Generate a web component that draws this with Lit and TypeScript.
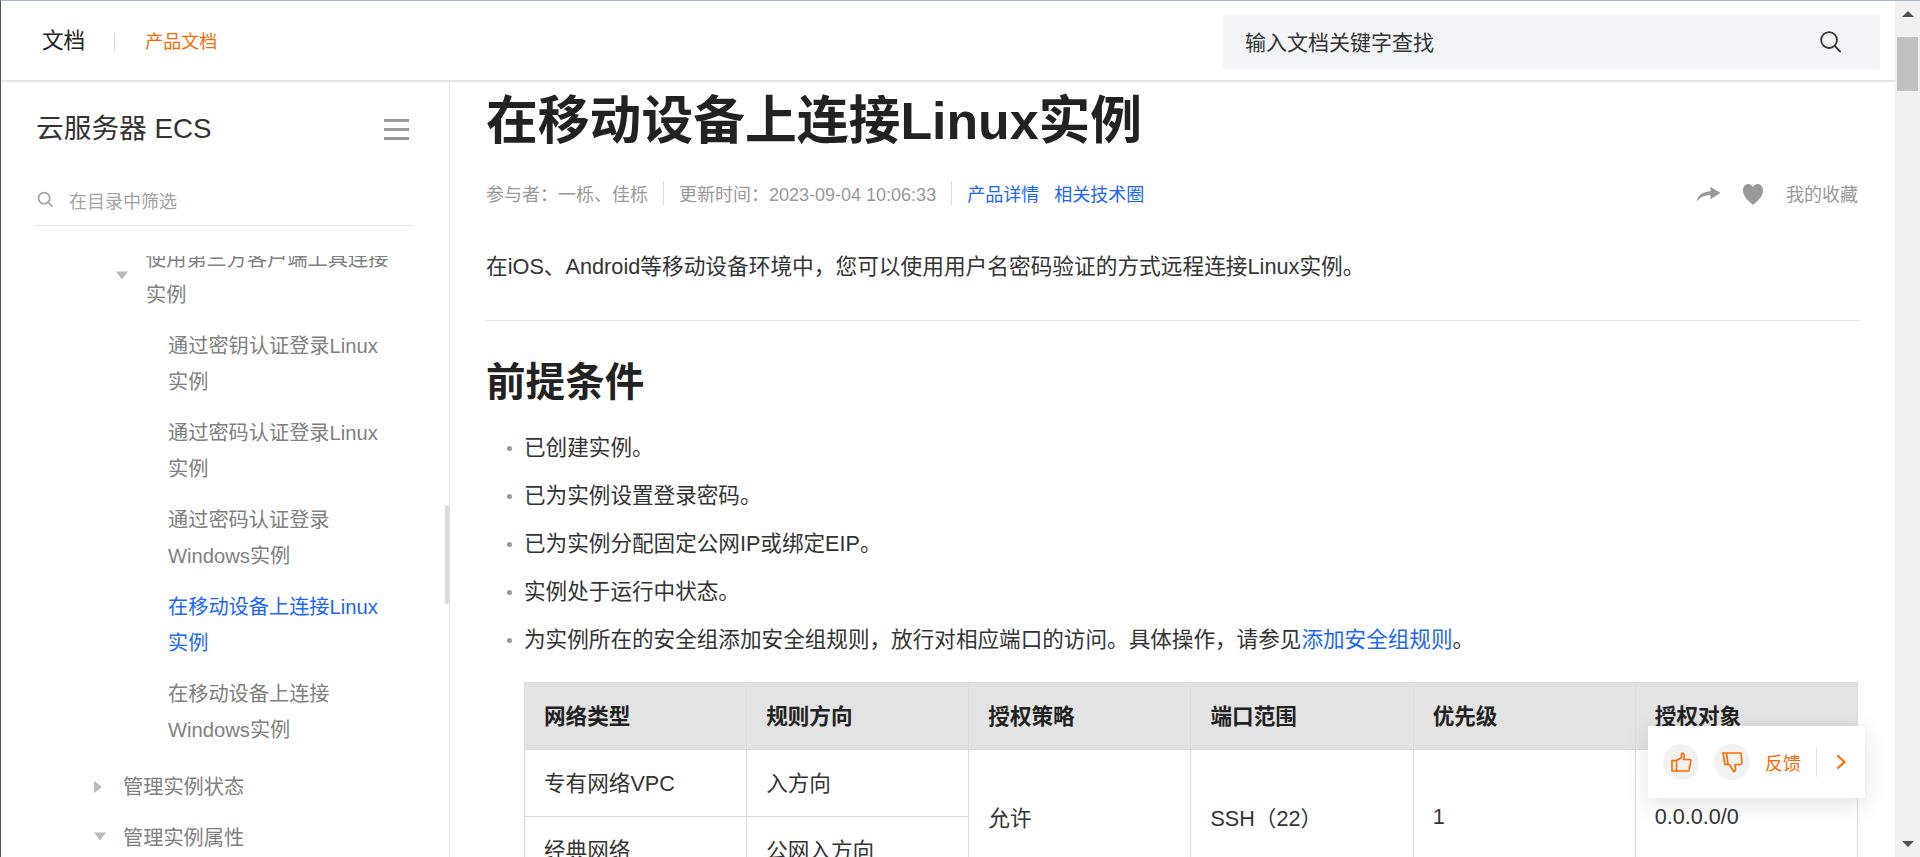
import { LitElement, html, css, svg } from "lit";
import { customElement } from "lit/decorators.js";

type Node = { t: string; lvl: number; arrow?: "down" | "right"; active?: boolean; cls?: string };

const TREE: Node[] = [
  { t: "使用第三方客户端工具连接实例", lvl: 2, arrow: "down" },
  { t: "通过密钥认证登录Linux实例", lvl: 3 },
  { t: "通过密码认证登录Linux实例", lvl: 3 },
  { t: "通过密码认证登录Windows实例", lvl: 3 },
  { t: "在移动设备上连接Linux实例", lvl: 3, active: true },
  { t: "在移动设备上连接Windows实例", lvl: 3, cls: "endgroup" },
  { t: "管理实例状态", lvl: 1, arrow: "right" },
  { t: "管理实例属性", lvl: 1, arrow: "down" },
];

const search = (stroke: string, w: number) => svg`<circle cx="8.4" cy="8.4" r="6.6" fill="none" stroke=${stroke} stroke-width=${w}/><path d="M13.2 13.2 L17.6 18" fill="none" stroke=${stroke} stroke-width=${w} stroke-linecap="round"/>`;

@customElement("app-root")
export class AppRoot extends LitElement {
  static styles = css`
    :host { display: block; width: 1920px; height: 857px; overflow: hidden; position: relative; background: #fff;
      font-family: "Liberation Sans", "Noto Sans CJK SC", sans-serif; color: #333; box-sizing: border-box;
      border-top: 1px solid #a9b8d6; border-left: 1px solid #555; }
    * { box-sizing: border-box; }
    .app { display: flex; height: 856px; }
    .main { width: 1894px; display: flex; flex-direction: column; height: 100%; }
    .sb { flex: 1; background: #f1f1f1; display: flex; flex-direction: column; align-items: center; justify-content: space-between; padding: 10px 2px 10px; position: relative; }
    .sb-top { display: flex; flex-direction: column; align-items: center; width: 100%; }
    .tri-up { width: 0; height: 0; border-left: 6px solid transparent; border-right: 6px solid transparent; border-bottom: 6px solid #505050; }
    .thumb { width: 21px; height: 54px; background: #c1c1c1; margin-top: 20px; }
    .tri-down { width: 0; height: 0; border-left: 6px solid transparent; border-right: 6px solid transparent; border-top: 6px solid #505050; }

    header { height: 81px; flex: none; border-bottom: 2px solid #e6e6e6; display: flex; align-items: center; padding: 0 15px 0 41px; }
    .brand { font-size: 21.6px; color: #222; line-height: 28px; margin-top: 1px; }
    .hsep { width: 1px; height: 18px; background: #d9d9d9; margin: 2px 30px 0 29px; }
    .prod { font-size: 18px; color: #ff6a00; line-height: 28px; flex: 1; margin-top: 2px; }
    .hsearch { width: 657px; height: 54px; background: #f2f4f7; display: flex; align-items: center; justify-content: space-between; padding: 0 37px 0 22px; margin-top: 3px; }
    .hsearch span { font-size: 21px; color: #333; margin-top: -3px; }
    .hsearch svg { width: 24px; height: 24px; display: block; }

    .body { flex: 1; display: flex; min-height: 0; }
    aside { width: 449px; flex: none; border-right: 1px solid #e3e3e3; display: flex; flex-direction: column; position: relative; overflow: hidden; padding-left: 35px; }
    .side-head { display: flex; justify-content: space-between; align-items: center; height: 40px; margin-top: 24px; padding-right: 40px; }
    .side-title { font-size: 27.7px; color: #333; }
    .burger { display: flex; flex-direction: column; gap: 6px; width: 25px; margin-top: 7px; }
    .burger i { display: block; height: 3px; background: #999; }
    .filter { width: 377px; height: 52px; margin-top: 28px; border-bottom: 1px solid #e5e5e5; display: flex; align-items: center; gap: 15px; padding: 0 0 0 1px; }
    .filter svg { width: 17px; height: 17px; flex: none; }
    .filter span { font-size: 18px; color: #a3a3a3; }
    .tree { flex: 1; min-height: 0; overflow: hidden; margin-top: 30px; width: 357px; }
    .tree-inner { margin-top: -15px; }
    .node { font-size: 20.2px; line-height: 36px; color: #808080; margin-bottom: 15px; position: relative; }
    .node.active { color: #1a66ff; }
    .node.endgroup { margin-bottom: 21px; }
    .l1 { padding-left: 87px; } .l2 { padding-left: 110px; } .l3 { padding-left: 132px; }
    .arr { position: absolute; width: 0; height: 0; top: 50%; }
    .arr.down { border-left: 6px solid transparent; border-right: 6px solid transparent; border-top: 8.5px solid #b9b9b9; transform: translateY(-70%); }
    .arr.right { border-top: 6px solid transparent; border-bottom: 6px solid transparent; border-left: 8.5px solid #b9b9b9; transform: translateY(-50%); }
    .l1 .arr { left: 58px; } .l2 .arr { left: 80px; }
    .side-thumb { position: absolute; right: 0; top: 423px; width: 4px; height: 99px; background: #dcdcdc; border-radius: 2px; }

    .content { flex: 1; min-width: 0; overflow: hidden; padding: 0 36px 0 36px; }
    h1 { margin: 0; font-size: 51.8px; line-height: 62px; font-weight: 700; color: #222; padding-top: 8px; }
    .meta { display: flex; align-items: center; height: 24px; font-size: 18px; color: #999; margin-top: 29px; }
    .meta .s { width: 1px; height: 24px; background: #ddd; margin: 0 15px 0 15px; }
    .meta a { color: #1a66ff; margin-right: 15px; }
    .meta .right { margin-left: auto; display: flex; align-items: center; }
    .meta .right svg { display: block; margin-top: 2px; }
    .meta .share { width: 25px; height: 16px; margin-right: 22px; }
    .meta .heart { width: 20px; height: 21px; margin-right: 23px; }
    .meta .right span { width: 73px; }
    p.lead { margin: 48px 0 0; font-size: 21.7px; line-height: 28px; color: #333; }
    hr { border: 0; border-top: 1px solid #e5e5e5; margin: 39px 0 0; }
    h2 { margin: 37px 0 0; font-size: 39.6px; line-height: 48px; font-weight: 700; color: #222; }
    ul { list-style: none; margin: 28px 0 0; padding: 0 0 0 38px; }
    li { font-size: 21.6px; line-height: 28px; margin-bottom: 20px; position: relative; color: #333; }
    li:last-child { margin-bottom: 28px; }
    li::before { content: ""; position: absolute; left: -17px; top: 12px; width: 5px; height: 5px; border-radius: 50%; background: #999; }
    li a { color: #1a66ff; }
    table { border-collapse: collapse; table-layout: fixed; width: 1334px; margin: 0 0 0 38px; font-size: 21.6px; color: #333; }
    th { background: #e3e3e3; height: 67px; font-weight: 700; text-align: left; padding: 0 19px 3px; border: 1px solid #dcdcdc; color: #222; }
    td { height: 67px; padding: 0 19px; border: 1px solid #dcdcdc; }
    td.up { padding-bottom: 3px; }

    .fb { position: absolute; left: 1647px; top: 725px; width: 217px; height: 72px; background: #fff; box-shadow: 0 6px 24px rgba(0,0,0,.12); display: flex; align-items: center; padding-left: 15px; color: #ff6a00; }
    .circ { width: 36px; height: 36px; border-radius: 50%; background: #f2f2f2; display: flex; align-items: center; justify-content: center; flex: none; }
    .circ + .circ { margin-left: 15px; }
    .circ svg { width: 24px; height: 24px; display: block; }
    .fbt { font-size: 18px; margin-left: 15px; }
    .fbs { width: 1px; height: 30px; background: #e5e5e5; margin-left: 15px; }
    .fbc { width: 10px; height: 16px; margin-left: 19px; display: block; }
  `;

  render() {
    return html`<div class="app">
      <div class="main">
        <header>
          <span class="brand">文档</span><i class="hsep"></i><span class="prod">产品文档</span>
          <div class="hsearch"><span>输入文档关键字查找</span><svg viewBox="0 0 20 20">${search("#333", 1.5)}</svg></div>
        </header>
        <div class="body">
          <aside>
            <div class="side-head"><span class="side-title">云服务器 ECS</span><div class="burger"><i></i><i></i><i></i></div></div>
            <div class="filter"><svg viewBox="0 0 20 20">${search("#a3a3a3", 2)}</svg><span>在目录中筛选</span></div>
            <div class="tree"><div class="tree-inner">
              ${TREE.map((n) => html`<div class="node l${n.lvl} ${n.active ? "active" : ""} ${n.cls ?? ""}">${n.arrow ? html`<i class="arr ${n.arrow}"></i>` : ""}${n.t}</div>`)}
            </div></div>
            <div class="side-thumb"></div>
          </aside>
          <main class="content">
            <h1>在移动设备上连接Linux实例</h1>
            <div class="meta">
              <span>参与者：一栎、佳栎</span><i class="s"></i>
              <span>更新时间：2023-09-04 10:06:33</span><i class="s"></i>
              <a>产品详情</a><a>相关技术圈</a>
              <div class="right">
                <svg class="share" viewBox="0 0 25 18" preserveAspectRatio="none"><path fill="#999" d="M0.5 17.5 C2 10 7 6.3 14.5 5.8 L14.5 0.8 L24.5 8 L14.5 15 L14.5 10.3 C8.5 10 4 12.5 0.5 17.5 Z"/></svg>
                <svg class="heart" viewBox="0 0 20 18" preserveAspectRatio="none"><path fill="#999" d="M10 18 C5 14 0 10.5 0 5.5 C0 2.3 2.4 0 5.3 0 C7.2 0 9 1 10 2.7 C11 1 12.8 0 14.7 0 C17.6 0 20 2.3 20 5.5 C20 10.5 15 14 10 18 Z"/></svg>
                <span>我的收藏</span>
              </div>
            </div>
            <p class="lead">在iOS、Android等移动设备环境中，您可以使用用户名密码验证的方式远程连接Linux实例。</p>
            <hr />
            <h2>前提条件</h2>
            <ul>
              <li>已创建实例。</li>
              <li>已为实例设置登录密码。</li>
              <li>已为实例分配固定公网IP或绑定EIP。</li>
              <li>实例处于运行中状态。</li>
              <li>为实例所在的安全组添加安全组规则，放行对相应端口的访问。具体操作，请参见<a>添加安全组规则</a>。</li>
            </ul>
            <table>
              <thead><tr><th>网络类型</th><th>规则方向</th><th>授权策略</th><th>端口范围</th><th>优先级</th><th>授权对象</th></tr></thead>
              <tbody>
                <tr><td class="up">专有网络VPC</td><td class="up">入方向</td><td rowspan="2">允许</td><td rowspan="2">SSH（22）</td><td rowspan="2">1</td><td rowspan="2">0.0.0.0/0</td></tr>
                <tr><td class="up">经典网络</td><td class="up">公网入方向</td></tr>
              </tbody>
            </table>
          </main>
        </div>
      </div>
      <div class="sb">
        <div class="sb-top"><div class="tri-up"></div><div class="thumb"></div></div>
        <div class="tri-down"></div>
      </div>
    </div>
    <div class="fb">
      <div class="circ"><svg viewBox="0 0 24 24" fill="none" stroke="#ff6a00" stroke-width="1.6" stroke-linejoin="round" stroke-linecap="round"><path d="M7.5 10.5 V21 H3 V10.5 Z"/><path d="M7.5 10.5 L12 8 L13 3 C15 3 15.6 5 15 7.5 L14.6 9.5 H20.5 C21.4 9.5 22 10.3 21.8 11.2 L20.2 20 C20 20.6 19.5 21 19 21 H7.5"/></svg></div>
      <div class="circ"><svg viewBox="0 0 24 24" fill="none" stroke="#ff6a00" stroke-width="1.6" stroke-linejoin="round" stroke-linecap="round"><path d="M3 3 H21 L22 13 C22 14 21 14.5 20.5 14.5 H15 L15.5 18 C15.8 20.5 14.8 22 13.5 21.5 L9.5 14.5 H5 L3 3 Z"/><path d="M6.5 3.5 L8 14"/></svg></div>
      <span class="fbt">反馈</span><i class="fbs"></i>
      <svg class="fbc" viewBox="0 0 10 16" fill="none" stroke="#ff6a00" stroke-width="2.2"><path d="M1.5 1.5 L8.5 8 L1.5 14.5"/></svg>
    </div>`;
  }
}
